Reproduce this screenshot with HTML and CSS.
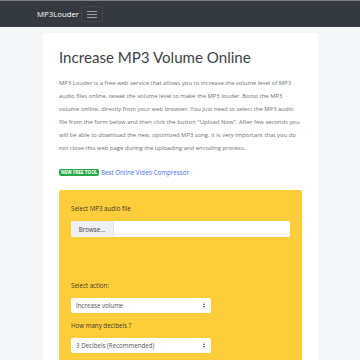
FILE: index.html
```html
<!DOCTYPE html>
<html>
<head>
<meta charset="utf-8">
<link rel="stylesheet" href="styles.css">
</head>
<body>
<nav class="navbar">
  <span class="brand">MP3Louder</span>
  <span class="toggler"><span class="bar"></span><span class="bar"></span><span class="bar"></span></span>
</nav>
<main class="main">
  <section class="card">
    <h1 class="title">Increase MP3 Volume Online</h1>
    <p class="lead">MP3 Louder is a free web service that allows you to increase the volume level of MP3 audio files online, tweak the volume level to make the MP3 louder. Boost the MP3 volume online, directly from your web browser. You just need to select the MP3 audio file from the form below and then click the button "Upload Now". After few seconds you will be able to download the new, optimized MP3 song. It is very important that you do not close this web page during the uploading and encoding process.</p>
    <p class="promo"><span class="badge">NEW FREE TOOL</span> <a class="link" href="#">Best Online Video Compressor</a></p>
    <form class="box">
      <label class="label">Select MP3 audio file</label>
      <div class="file"><span class="browse">Browse...</span><span class="fname"></span></div>
      <label class="label label-action">Select action:</label>
      <div class="select"><span>Increase volume</span><span class="arrows"><span class="up"></span><span class="down"></span></span></div>
      <label class="label label-db">How many decibels ?</label>
      <div class="select"><span>3 Decibels (Recommended)</span><span class="arrows"><span class="up"></span><span class="down"></span></span></div>
    </form>
  </section>
</main>
</body>
</html>
```

FILE: styles.css
```css
html, body {
  margin: 0;
  padding: 0;
  background: #f5f6f8;
  font-family: "Open Sans", "Noto Sans", sans-serif;
  height: 360px;
  overflow: hidden;
}
.navbar {
  height: 26px;
  border-top: 1px solid #7d8185;
  background: #343a40;
  display: flex;
  align-items: center;
  padding-left: 37px;
}
.brand {
  color: #fff;
  font-size: 7.8px;
  line-height: 12px;
}
.toggler {
  margin-left: 2px;
  width: 22px;
  height: 16px;
  box-sizing: border-box;
  border: 1px solid rgba(255,255,255,0.08);
  border-radius: 2px;
  display: flex;
  flex-direction: column;
  justify-content: center;
  align-items: center;
  gap: 2px;
}
.bar {
  width: 10px;
  height: 1px;
  background: #9a9ea2;
}
.main {
  padding: 6px 0 0 43px;
}
.card {
  width: 275px;
  background: #fff;
  border-radius: 2px;
  padding: 15px 16px 0 16px;
  box-sizing: border-box;
  height: 400px;
}
.title {
  margin: 0;
  font-family: "Lato", "Open Sans", sans-serif;
  font-size: 15.1px;
  font-weight: 400;
  line-height: 19px;
  color: #3d4246;
}
.lead {
  margin: 10px 0 0 0;
  font-size: 5.9px;
  line-height: 13px;
  color: #6c7176;
}
.promo {
  margin: 11px 0 0 0;
  font-size: 6.2px;
  line-height: 13px;
}
.badge {
  display: inline-block;
  background: #28a745;
  color: #fff;
  font-weight: 700;
  font-size: 4.6px;
  line-height: 7px;
  padding: 0 2px;
  border-radius: 2px;
  vertical-align: 1px;
}
.link {
  color: #3f6ff0;
  text-decoration: none;
}
.box {
  margin-top: 11px;
  background: #fecd3b;
  border-radius: 2px;
  padding: 12px 12px 0 12px;
  height: 200px;
  display: flex;
  flex-direction: column;
  align-items: flex-start;
}
.label {
  font-size: 6.2px;
  line-height: 13px;
  color: #3a3a2c;
}
.file {
  margin-top: 6px;
  width: 219px;
  height: 16px;
  display: flex;
  background: #fff;
  border-radius: 2px;
  overflow: hidden;
}
.browse {
  width: 42px;
  background: #eef0f2;
  font-size: 6.2px;
  color: #444;
  display: flex;
  align-items: center;
  justify-content: center;
  border-right: 1px solid #e0e3e6;
}
.label-action {
  margin-top: 42px;
}
.select {
  margin-top: 6px;
  width: 140px;
  height: 15px;
  box-sizing: border-box;
  background: #fff;
  border-radius: 2px;
  padding: 0 6px 0 5px;
  display: flex;
  align-items: center;
  justify-content: space-between;
  font-size: 6.2px;
  color: #555;
}
.label-db {
  margin-top: 6px;
}
.arrows {
  display: flex;
  flex-direction: column;
  gap: 1px;
}
.up {
  width: 0; height: 0;
  border-left: 1.5px solid transparent;
  border-right: 1.5px solid transparent;
  border-bottom: 2px solid #444;
}
.down {
  width: 0; height: 0;
  border-left: 1.5px solid transparent;
  border-right: 1.5px solid transparent;
  border-top: 2px solid #444;
}
```
